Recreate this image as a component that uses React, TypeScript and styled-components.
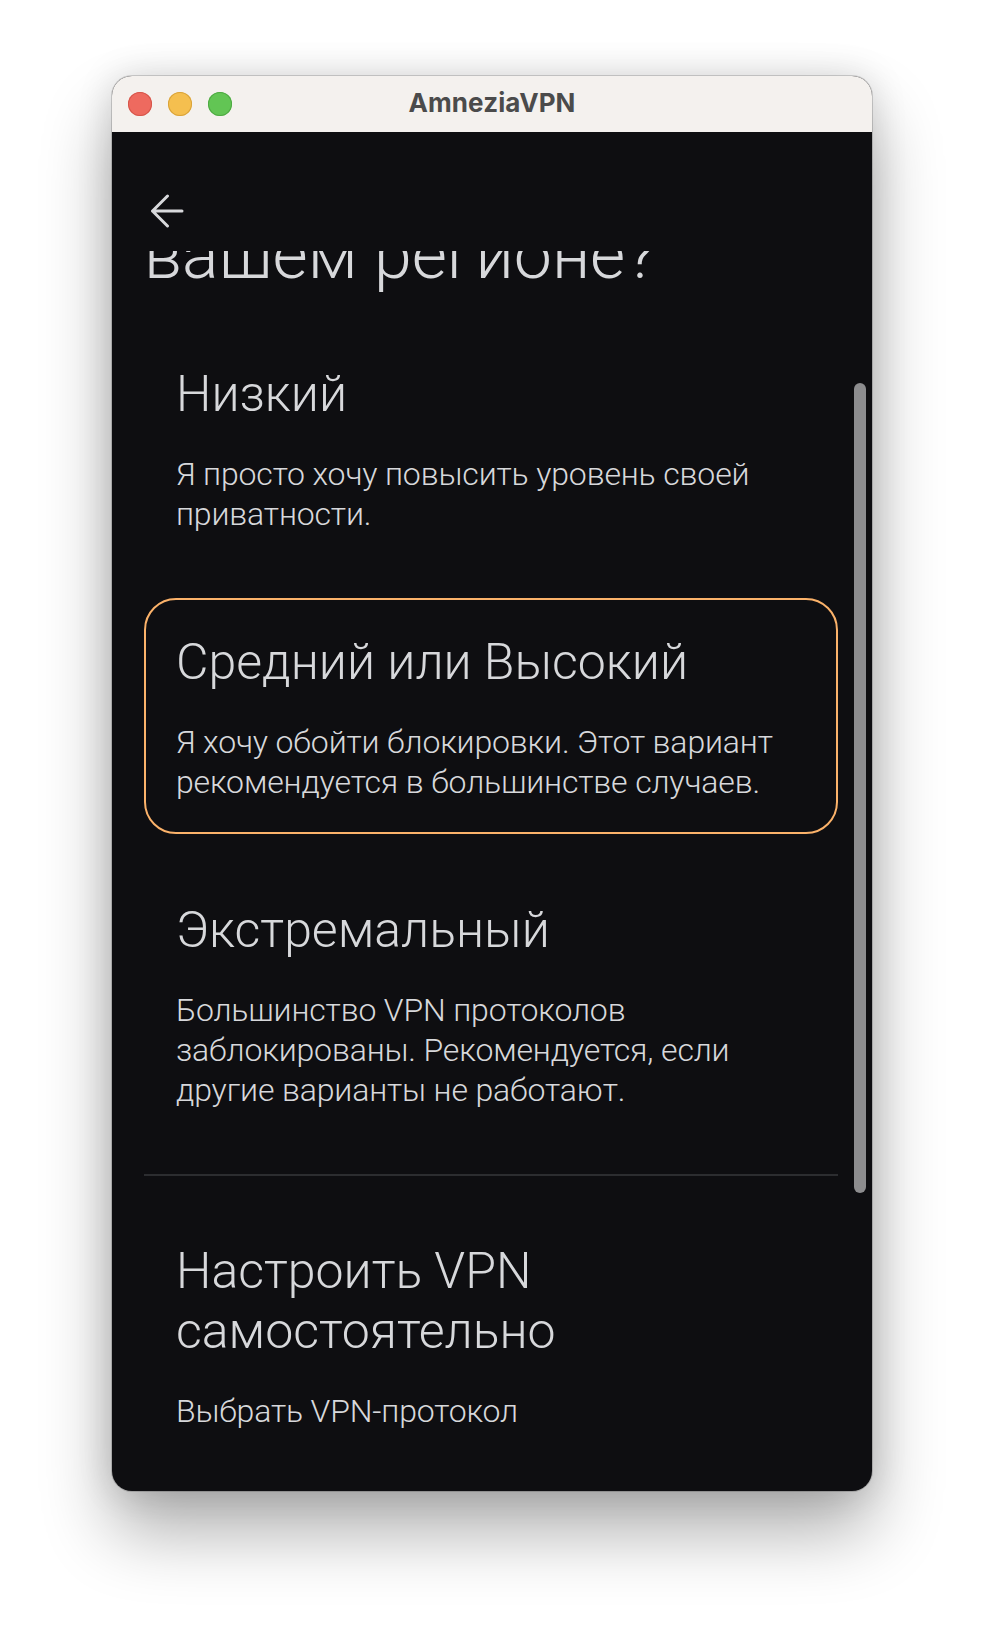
import React from 'react'
import styled, { createGlobalStyle } from 'styled-components'

const GlobalStyle = createGlobalStyle`
  html, body {
    margin: 0;
    padding: 0;
    background: #ffffff;
  }
  body {
    font-family: Roboto, 'Liberation Sans', sans-serif;
  }
`

const Desktop = styled.div`
  width: 984px;
  height: 1640px;
  box-sizing: border-box;
  padding-top: 76px;
  display: flex;
  justify-content: center;
  overflow: hidden;
`

const Window = styled.div`
  width: 760px;
  height: 1415px;
  border-radius: 20px;
  overflow: hidden;
  display: flex;
  flex-direction: column;
  background: #0e0e11;
  box-shadow: 0 0 0 1px rgba(0, 0, 0, 0.16), 0 40px 70px rgba(0, 0, 0, 0.32),
    0 0 36px rgba(0, 0, 0, 0.14);
`

const TitleBar = styled.div`
  height: 56px;
  flex: none;
  display: flex;
  align-items: center;
  background: #f4f1ee;
  padding: 0 16px;
`

const Lights = styled.div`
  display: flex;
  gap: 16px;
  width: 104px;
`

const Light = styled.span<{ $color: string; $edge: string }>`
  width: 24px;
  height: 24px;
  border-radius: 50%;
  background: ${(p) => p.$color};
  box-shadow: inset 0 0 0 1px ${(p) => p.$edge};
`

const WindowTitle = styled.div`
  flex: 1;
  text-align: center;
  margin-right: 104px;
  padding-bottom: 2px;
  font-family: Inter, 'Liberation Sans', sans-serif;
  font-weight: 700;
  font-size: 26px;
  line-height: 30px;
  color: #4b4b4b;
  letter-spacing: 0.1px;
`

const Header = styled.div`
  height: 119px;
  flex: none;
  box-sizing: border-box;
  padding: 62px 0 0 38px;
`

const BackButton = styled.button`
  width: 34px;
  height: 34px;
  padding: 0;
  border: none;
  background: none;
  color: #d7d8db;
  display: block;
`

const Scroller = styled.div`
  flex: 1;
  min-height: 0;
  display: flex;
  overflow: hidden;
`

const Content = styled.div`
  flex: 1;
  padding-left: 32px;
  display: flex;
  flex-direction: column;
  color: #d7d8db;
`

const HeadingClip = styled.div`
  height: 42px;
  overflow: hidden;
  display: flex;
  flex-direction: column;
  justify-content: flex-end;
  margin-bottom: 37px;
`

const Heading = styled.h1`
  margin: 0;
  font-size: 68px;
  line-height: 76px;
  font-weight: 300;
`

const OptionList = styled.div`
  display: flex;
  flex-direction: column;
  gap: 32px;
`

const Option = styled.div<{ $selected?: boolean }>`
  border: 2px solid ${(p) => (p.$selected ? '#fbb26a' : 'transparent')};
  border-radius: 32px;
  padding: 32px 30px 30px;
`

const OptionTitle = styled.div`
  font-size: 50px;
  line-height: 60px;
  font-weight: 300;
`

const OptionText = styled.div`
  margin-top: 30px;
  font-size: 32px;
  line-height: 40px;
  font-weight: 300;
  letter-spacing: -0.15px;
`

const Divider = styled.div`
  height: 2px;
  background: #2c2d30;
  margin: 32px 0 31px;
`

const Track = styled.div`
  width: 34px;
  flex: none;
  box-sizing: border-box;
  padding: 132px 6px 0 16px;
`

const Thumb = styled.div`
  width: 12px;
  height: 810px;
  border-radius: 6px;
  background: #8d8d8f;
`

const options = [
  {
    title: 'Низкий',
    text: 'Я просто хочу повысить уровень своей приватности.',
  },
  {
    title: 'Средний или Высокий',
    text: 'Я хочу обойти блокировки. Этот вариант рекомендуется в большинстве случаев.',
    selected: true,
  },
  {
    title: 'Экстремальный',
    text: 'Большинство VPN протоколов заблокированы. Рекомендуется, если другие варианты не работают.',
  },
]

const ArrowLeft = () => (
  <svg width="34" height="34" viewBox="0 0 34 34" fill="none">
    <path
      d="M2.5 17H32M17.5 2L2.5 17L17.5 32"
      stroke="currentColor"
      strokeWidth="3"
      strokeLinecap="round"
      strokeLinejoin="round"
    />
  </svg>
)

const App: React.FC = () => {
  return (
    <Desktop>
      <GlobalStyle />
      <Window>
        <TitleBar>
          <Lights>
            <Light $color="#ee6a5f" $edge="#d5564b" />
            <Light $color="#f5bf4f" $edge="#d9a33a" />
            <Light $color="#62c554" $edge="#4ea943" />
          </Lights>
          <WindowTitle>AmneziaVPN</WindowTitle>
        </TitleBar>

        <Header>
          <BackButton aria-label="Назад">
            <ArrowLeft />
          </BackButton>
        </Header>

        <Scroller>
          <Content>
            <HeadingClip>
              <Heading>Какой уровень контроля интернета в вашем регионе?</Heading>
            </HeadingClip>

            <OptionList>
              {options.map((o) => (
                <Option key={o.title} $selected={o.selected}>
                  <OptionTitle>{o.title}</OptionTitle>
                  <OptionText>{o.text}</OptionText>
                </Option>
              ))}
            </OptionList>

            <Divider />

            <Option>
              <OptionTitle>Настроить VPN самостоятельно</OptionTitle>
              <OptionText>Выбрать VPN-протокол</OptionText>
            </Option>
          </Content>
          <Track>
            <Thumb />
          </Track>
        </Scroller>
      </Window>
    </Desktop>
  )
}

export default App
